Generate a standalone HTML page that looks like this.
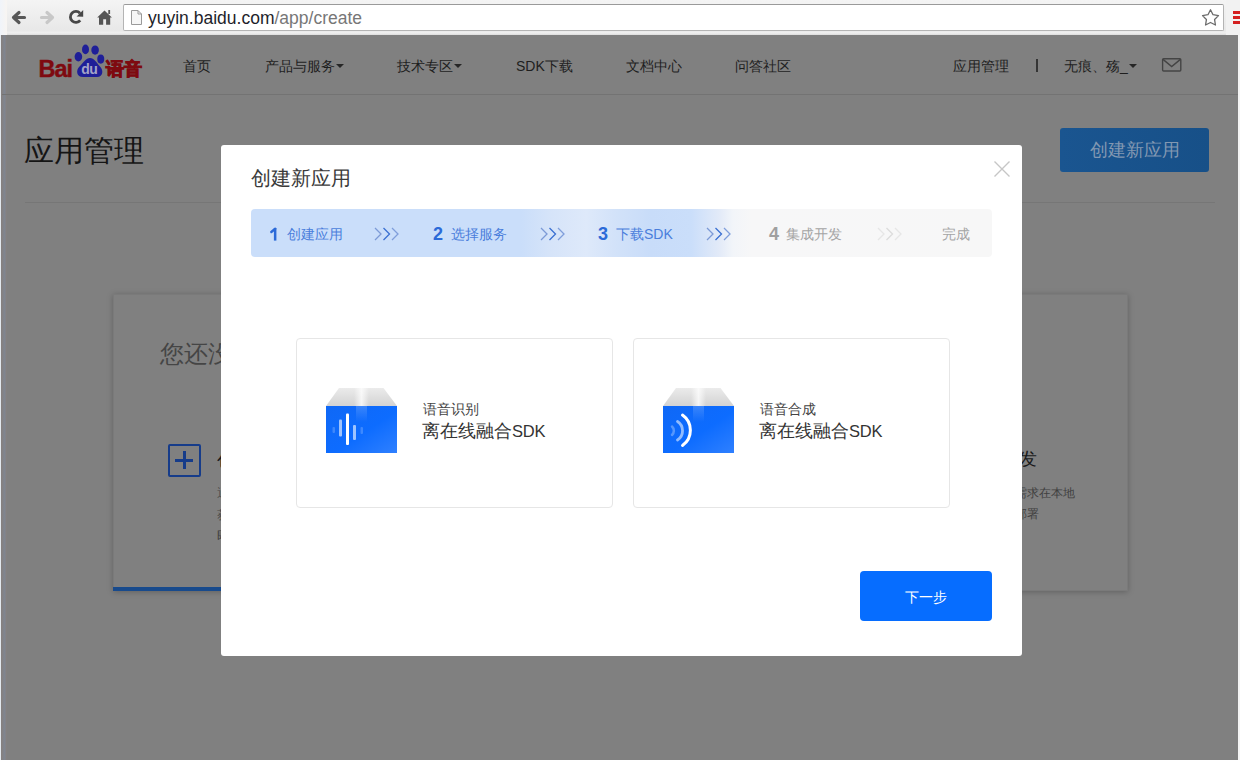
<!DOCTYPE html>
<html><head><meta charset="utf-8">
<style>
*{margin:0;padding:0;box-sizing:border-box}
html,body{width:1240px;height:760px;overflow:hidden;background:#808080;font-family:"Liberation Sans",sans-serif;position:relative}
.a{position:absolute;white-space:nowrap}
#chrome{position:absolute;left:0;top:0;width:1240px;height:35px;background:linear-gradient(#f4f4f4,#e8e8e8 88%,#f0f0f0 94%,#dcdcdc)}
#addr{position:absolute;left:123px;top:4px;width:1101px;height:27px;background:#fff;border:1px solid #b4b4b4;border-top-color:#9a9a9a;border-radius:2px}
#url{left:148px;top:8px;font-size:17.5px;line-height:20px;color:#1e1e2a}
#url span{color:#777}
.nav{top:57px;font-size:14px;line-height:18px;color:#1e1e1e}
.caret{display:inline-block;width:0;height:0;border-left:4px solid transparent;border-right:4px solid transparent;border-top:4px solid #262626;vertical-align:middle;margin-left:1px;margin-top:-2px}
#modal{position:absolute;left:221px;top:145px;width:801px;height:511px;background:#fff;border-radius:3px}
#steps{position:absolute;left:30px;top:64px;width:741px;height:48px;border-radius:4px;
 background:linear-gradient(90deg,#cadefa 0px,#cadefa 270px,#d6e4f9 300px,#dee9fa 335px,#d2e2f9 365px,#c8dcf9 400px,#cadefa 440px,#e2eaf8 468px,#f2f5f9 482px,#f7f7f8 500px,#f7f7f7 741px)}
.sn{top:17px;font-size:18px;line-height:16px;font-weight:bold}
.st{top:17px;font-size:14px;line-height:16px}
.chev{top:19px}
.card{position:absolute;top:193px;width:317px;height:170px;border:1px solid #e6e6e6;border-radius:4px;background:#fff}
.sub{font-size:13.5px;line-height:14px;color:#444;top:64px;left:126px}
.ttl{font-size:18px;line-height:20px;color:#333;top:82px;left:125px}
#next{position:absolute;left:639px;top:426px;width:132px;height:50px;background:#066dff;border-radius:4px;color:#fff;font-size:14px;line-height:52px;text-align:center}
</style></head><body>

<div id="chrome">
  <div style="position:absolute;left:0;top:0;width:7px;height:35px;background:linear-gradient(90deg,#f0f4fa,#f8f5f2)"></div>
  <svg class="a" style="left:0;top:0" width="120" height="35">
    <path d="M24.5 17.5H14.5 M19 12.5L13.5 17.5L19 22.5" stroke="#585858" stroke-width="3.2" fill="none" stroke-linecap="round" stroke-linejoin="round"/>
    <path d="M41.5 17.5H51.5 M47 12.5L52.5 17.5L47 22.5" stroke="#c8c8c8" stroke-width="3.2" fill="none" stroke-linecap="round" stroke-linejoin="round"/>
    <path d="M80 13.3 A5.5 5.5 0 1 0 80.2 20.4" stroke="#474747" stroke-width="2.8" fill="none"/>
    <path d="M76.6 16.6 L83.2 9.9 L83.2 16.8 Z" fill="#474747"/>
    <path d="M104.5 10.6 L111.9 17.6 L110.2 17.6 L110.2 24.7 L106.1 24.7 L106.1 19.2 L103.2 19.2 L103.2 24.7 L99 24.7 L99 17.6 L97.2 17.6 Z" fill="#555"/>
    <rect x="108.3" y="10" width="1.8" height="4" fill="#555"/>
  </svg>
  <div id="addr"></div>
  <svg class="a" style="left:129px;top:9px" width="14" height="17">
    <path d="M2.5 1.5 H9 L12.5 5 V15.5 H2.5 Z" fill="#f6f6f6" stroke="#9a9a9a" stroke-width="1"/>
    <path d="M9 1.5 V5 H12.5" fill="none" stroke="#9a9a9a" stroke-width="1"/>
  </svg>
  <svg class="a" style="left:1200px;top:7px" width="22" height="20">
    <path d="M10.50 2.80 L13.03 7.72 L18.49 8.60 L14.59 12.53 L15.44 18.00 L10.50 15.50 L5.56 18.00 L6.41 12.53 L2.51 8.60 L7.97 7.72 Z" fill="none" stroke="#6a6a6a" stroke-width="1.3" stroke-linejoin="round"/>
  </svg>
  <div style="position:absolute;left:1226px;top:0;width:14px;height:35px;background:#f2f2f2"></div>
  <div style="position:absolute;left:1233px;top:11px;width:7px;height:2.5px;background:#d42020"></div>
  <div style="position:absolute;left:1233px;top:16px;width:7px;height:2.5px;background:#d42020"></div>
  <div style="position:absolute;left:1233px;top:21px;width:7px;height:2.5px;background:#d42020"></div>
</div>
<div id="url" class="a">yuyin.baidu.com<span>/app/create</span></div>

<!-- page (already darkened) -->
<div class="a" style="left:0;top:35px;width:1px;height:725px;background:#e2e8ee"></div><div class="a" style="left:1px;top:35px;width:6px;height:725px;background:linear-gradient(90deg,#867f7c,#7f8590 60%,#857f7c)"></div>
<div class="a" style="left:1238px;top:35px;width:2px;height:725px;background:#f4f4f4"></div>
<div class="a" style="left:2px;top:94px;width:1236px;height:1px;background:#737373"></div>

<!-- logo -->
<div class="a" style="left:38.5px;top:56px;font-size:23.5px;line-height:26px;font-weight:bold;color:#7e0a10;letter-spacing:-1px;-webkit-text-stroke:0.4px #7e0a10">Bai</div>
<svg class="a" style="left:74px;top:43px" width="32" height="36">
  <ellipse cx="11.5" cy="6.4" rx="3.5" ry="4.9" fill="#1f1f98"/>
  <ellipse cx="21.1" cy="7.1" rx="3.8" ry="4.6" fill="#1f1f98"/>
  <ellipse cx="4.4" cy="13.75" rx="3.8" ry="4.75" fill="#1f1f98"/>
  <ellipse cx="26.75" cy="16.1" rx="3.5" ry="4.6" fill="#1f1f98"/>
  <path d="M16 15 C20 15 23 20 26 23.5 C29.5 27 29.5 34 23 34 L9 34 C2.5 34 1.5 27.5 5.5 23.5 C9 20 12 15 16 15 Z" fill="#1f1f98"/>
  <text x="15.2" y="31" font-family="Liberation Sans" font-size="14" font-weight="bold" fill="#a4a4c8" text-anchor="middle" letter-spacing="-0.6">du</text>
</svg>
<div class="a" style="left:106px;top:57.5px;font-size:18px;line-height:22px;font-weight:bold;color:#7e0a10;-webkit-text-stroke:1px #7e0a10">语音</div>

<div class="a nav" style="left:183px">首页</div>
<div class="a nav" style="left:265px">产品与服务<span class="caret"></span></div>
<div class="a nav" style="left:397px">技术专区<span class="caret"></span></div>
<div class="a nav" style="left:516px">SDK下载</div>
<div class="a nav" style="left:626px">文档中心</div>
<div class="a nav" style="left:735px">问答社区</div>
<div class="a nav" style="left:953px">应用管理</div>
<div class="a" style="left:1036px;top:59px;width:1.5px;height:13px;background:#353535"></div>
<div class="a nav" style="left:1064px">无痕、殇_<span class="caret"></span></div>
<svg class="a" style="left:1161px;top:57px" width="22" height="16">
  <rect x="1.6" y="1.8" width="18.2" height="12.2" rx="1" fill="none" stroke="#444" stroke-width="1.4"/>
  <path d="M2 2.4 L10.7 9.6 L19.4 2.4" fill="none" stroke="#444" stroke-width="1.4"/>
</svg>

<div class="a" style="left:24px;top:133px;font-size:30px;line-height:36px;color:#151515">应用管理</div>
<div class="a" style="left:1060px;top:128px;width:149px;height:44px;border-radius:3px;background:linear-gradient(90deg,#1a5590,#175088);color:#8298b2;font-size:18px;line-height:44px;text-align:center">创建新应用</div>
<div class="a" style="left:25px;top:202px;width:1190px;height:1px;background:#767676"></div>

<!-- background card -->
<div class="a" style="left:113px;top:294px;width:1015px;height:297px;background:#808080;box-shadow:0 1px 6px rgba(0,0,0,.25);border:1px solid #7a7a7a"></div>
<div class="a" style="left:113px;top:587px;width:110px;height:4px;background:#184a8c"></div>
<div class="a" style="left:217px;top:449px;font-size:18px;line-height:22px;color:#1a1a1a">创建应用</div>
<div class="a" style="left:217px;top:485px;font-size:12px;line-height:16px;color:#4a4a4a">通过创建应用</div>
<div class="a" style="left:217px;top:507px;font-size:12px;line-height:16px;color:#4a4a4a">获取应用</div>
<div class="a" style="left:217px;top:528px;font-size:12px;line-height:16px;color:#3a3a3a">即可</div>
<div class="a" style="left:160px;top:340px;font-size:23.5px;line-height:28px;color:#454545">您还没</div>
<div class="a" style="left:168px;top:444px;width:33px;height:33px;border:2.6px solid #163c8a;border-radius:2px"></div>
<div class="a" style="left:183px;top:451px;width:2.5px;height:18px;background:#163c8a"></div>
<div class="a" style="left:175px;top:459px;width:18px;height:2.5px;background:#163c8a"></div>
<div class="a" style="left:1001px;top:448px;font-size:18px;line-height:22px;color:#1a1a1a">开发</div>
<div class="a" style="left:991px;top:485px;font-size:12px;line-height:16px;color:#3f3f3f">开发需求在本地</div>
<div class="a" style="left:1015px;top:506px;font-size:12px;line-height:16px;color:#3f3f3f">部署</div>

<!-- modal -->
<div id="modal">
  <div class="a" style="left:30px;top:21px;font-size:20px;line-height:24px;color:#3a3a3a">创建新应用</div>
  <svg class="a" style="left:772px;top:15px" width="18" height="18">
    <path d="M1.5 1.5 L16.5 16.5 M16.5 1.5 L1.5 16.5" stroke="#c6c6c6" stroke-width="1.4"/>
  </svg>
  <div id="steps">
    <svg class="a" style="left:0;top:0" width="40" height="48"><rect x="22.9" y="19" width="2.5" height="12.6" fill="#2c6ad8"/><path d="M20.3 23 L24.2 19.8" stroke="#2c6ad8" stroke-width="2.4" stroke-linecap="round"/></svg>
    <div class="a st" style="left:36px;color:#4a7edc">创建应用</div>
    <div class="a sn" style="left:182px;color:#2c6ad8">2</div>
    <div class="a st" style="left:200px;color:#4a7edc">选择服务</div>
    <div class="a sn" style="left:347px;color:#2c6ad8">3</div>
    <div class="a st" style="left:365px;color:#4a7edc">下载SDK</div>
    <div class="a sn" style="left:518px;color:#a0a0a0">4</div>
    <div class="a st" style="left:535px;color:#a5a5a5">集成开发</div>
    <div class="a st" style="left:691px;color:#a5a5a5">完成</div>
    <svg class="a" style="left:123px;top:18px" width="28" height="14">
      <path d="M1 1 L7 7 L1 13" stroke="#7c9ad6" stroke-width="1.3" fill="none"/>
      <path d="M9.5 1 L15.5 7 L9.5 13" stroke="#3a70d2" stroke-width="1.3" fill="none"/>
      <path d="M18 1 L24 7 L18 13" stroke="#7f9edb" stroke-width="1.3" fill="none"/>
    </svg>
    <svg class="a" style="left:289px;top:18px" width="28" height="14">
      <path d="M1 1 L7 7 L1 13" stroke="#7c9ad6" stroke-width="1.3" fill="none"/>
      <path d="M9.5 1 L15.5 7 L9.5 13" stroke="#3a70d2" stroke-width="1.3" fill="none"/>
      <path d="M18 1 L24 7 L18 13" stroke="#7f9edb" stroke-width="1.3" fill="none"/>
    </svg>
    <svg class="a" style="left:455px;top:18px" width="28" height="14">
      <path d="M1 1 L7 7 L1 13" stroke="#7c9ad6" stroke-width="1.3" fill="none"/>
      <path d="M9.5 1 L15.5 7 L9.5 13" stroke="#3a70d2" stroke-width="1.3" fill="none"/>
      <path d="M18 1 L24 7 L18 13" stroke="#7f9edb" stroke-width="1.3" fill="none"/>
    </svg>
    <svg class="a" style="left:626px;top:18px" width="28" height="14">
      <path d="M1 1 L7 7 L1 13" stroke="#e6e6e6" stroke-width="1.3" fill="none"/>
      <path d="M9.5 1 L15.5 7 L9.5 13" stroke="#dcdcdc" stroke-width="1.3" fill="none"/>
      <path d="M18 1 L24 7 L18 13" stroke="#e6e6e6" stroke-width="1.3" fill="none"/>
    </svg>
  </div>
  <div class="card" style="left:75px">
    <svg class="a" style="left:29px;top:49px" width="72" height="66" viewBox="0 0 72 66">
      <defs>
        <linearGradient id="gt" x1="0" y1="0" x2="0" y2="1"><stop offset="0" stop-color="#ebebeb"/><stop offset="1" stop-color="#d3d3d3"/></linearGradient>
        <linearGradient id="gb" x1="0" y1="0" x2="1" y2="1"><stop offset="0" stop-color="#0f68f6"/><stop offset=".55" stop-color="#0d6cff"/><stop offset="1" stop-color="#2f80ff"/></linearGradient>
        <linearGradient id="gh" x1="0" y1="0" x2="1" y2="0"><stop offset="0" stop-color="#fff" stop-opacity="0"/><stop offset=".5" stop-color="#fff" stop-opacity=".75"/><stop offset="1" stop-color="#fff" stop-opacity="0"/></linearGradient>
        <linearGradient id="gh2" x1="0" y1="0" x2="0" y2="1"><stop offset="0" stop-color="#fff" stop-opacity=".18"/><stop offset="1" stop-color="#fff" stop-opacity="0"/></linearGradient>
      </defs>
      <path d="M13 0 H57.5 L71 18 H0 Z" fill="url(#gt)"/>
      <rect x="28" y="0" width="15" height="18" fill="url(#gh)"/>
      <rect x="0" y="18" width="71" height="47" fill="url(#gb)"/>
      <rect x="30" y="18" width="11" height="16" fill="url(#gh2)"/>
      <rect x="6.5" y="39" width="2.5" height="6" rx="1" fill="#fff" opacity=".2"/>
      <rect x="13" y="31.5" width="3" height="17" rx="1" fill="#fff" opacity=".6"/>
      <rect x="20" y="25.5" width="3" height="31.5" rx="1" fill="#fff"/>
      <rect x="27" y="37" width="3" height="15" rx="1" fill="#fff" opacity=".6"/>
      <rect x="34.5" y="39" width="2.5" height="7" rx="1" fill="#fff" opacity=".2"/>
    </svg>
    <div class="a sub">语音识别</div>
    <div class="a ttl">离在线融合<span style="font-size:16.5px;letter-spacing:-0.2px">SDK</span></div>
  </div>
  <div class="card" style="left:412px">
    <svg class="a" style="left:29px;top:49px" width="72" height="66" viewBox="0 0 72 66">
      <path d="M13 0 H57.5 L71 18 H0 Z" fill="url(#gt)"/>
      <rect x="28" y="0" width="15" height="18" fill="url(#gh)"/>
      <rect x="0" y="18" width="71" height="47" fill="url(#gb)"/>
      <rect x="30" y="18" width="11" height="16" fill="url(#gh2)"/>
      <path d="M19.5 27 A18.7 18.7 0 0 1 19.5 57.5" stroke="#fff" stroke-width="3" fill="none" stroke-linecap="round"/>
      <path d="M14.5 33.5 A11 11 0 0 1 14.5 52" stroke="#fff" stroke-width="2.8" fill="none" stroke-linecap="round" opacity=".55"/>
      <path d="M9 38.5 A5.8 5.8 0 0 1 9 47" stroke="#fff" stroke-width="2.5" fill="none" stroke-linecap="round" opacity=".3"/>
    </svg>
    <div class="a sub">语音合成</div>
    <div class="a ttl">离在线融合<span style="font-size:16.5px;letter-spacing:-0.2px">SDK</span></div>
  </div>
  <div id="next">下一步</div>
</div>
</body></html>
